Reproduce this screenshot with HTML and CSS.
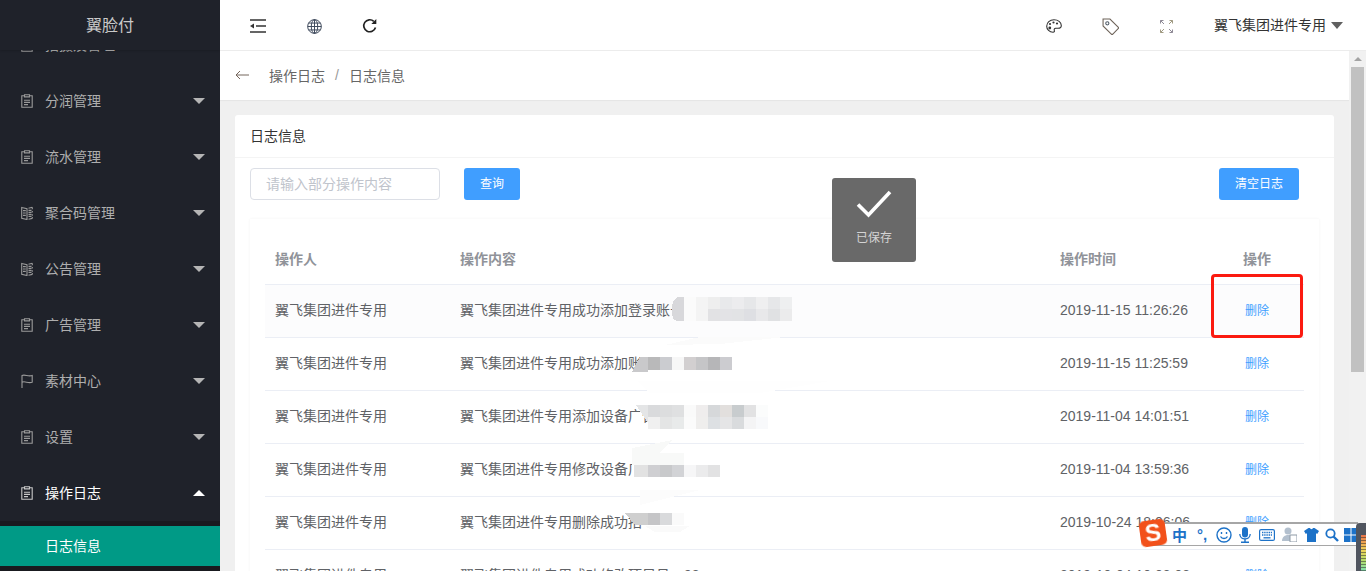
FILE: index.html
```html
<!DOCTYPE html>
<html lang="zh-CN">
<head>
    <meta charset="UTF-8">
    <meta name="viewport" content="width=device-width, initial-scale=1.0">
    <title>日志信息</title>
    <link rel="stylesheet" href="styles.css">
</head>
<body>
    <svg class="icon-defs" width="0" height="0">
        <symbol id="i-clip" viewBox="0 0 12 14">
            <path d="M3.500 1.800H.8v11.500h10.400V1.800H8.500M3.500.7h5v2.200h-5zM3 6.200h6M3 8.400h6M3 10.600h4" fill="none" stroke="currentColor" stroke-width="1.100"/>
        </symbol>
        <symbol id="i-book" viewBox="0 0 12 14">
            <path d="M.7 1.500 6 2.600v10.900L.7 12.400zM2 4.600h2.800M2 7h2.800M2 9.400h2.800M7.500 2.200 11.300 1.300M7.500 13.200l3.800-.8M11.300 1.300v2M11.300 5v1.500M11.300 8.300v1.500M11.300 11v1.400M7.500 4.400h3M7.500 6.400h3M7.500 8.400h3M7.500 10.400h3" fill="none" stroke="currentColor" stroke-width="1.100"/>
        </symbol>
        <symbol id="i-flag" viewBox="0 0 12 14">
            <path d="M1 14V1.500C4 0 7 3 11.200 1.500V8.200C7 9.700 4 6.700 1 8.200" fill="none" stroke="currentColor" stroke-width="1.100"/>
        </symbol>
    </svg>

    <div class="app">
        <aside class="sidebar">
            <div class="logo">翼脸付</div>
            <ul class="menu">
                <li class="menu-item"><svg class="menu-icon"><use href="#i-clip"/></svg><span>拍摄及管理</span><i class="caret"></i></li>
                <li class="menu-item"><svg class="menu-icon"><use href="#i-clip"/></svg><span>分润管理</span><i class="caret"></i></li>
                <li class="menu-item"><svg class="menu-icon"><use href="#i-clip"/></svg><span>流水管理</span><i class="caret"></i></li>
                <li class="menu-item"><svg class="menu-icon"><use href="#i-book"/></svg><span>聚合码管理</span><i class="caret"></i></li>
                <li class="menu-item"><svg class="menu-icon"><use href="#i-book"/></svg><span>公告管理</span><i class="caret"></i></li>
                <li class="menu-item"><svg class="menu-icon"><use href="#i-clip"/></svg><span>广告管理</span><i class="caret"></i></li>
                <li class="menu-item"><svg class="menu-icon"><use href="#i-flag"/></svg><span>素材中心</span><i class="caret"></i></li>
                <li class="menu-item"><svg class="menu-icon"><use href="#i-clip"/></svg><span>设置</span><i class="caret"></i></li>
                <li class="menu-item open"><svg class="menu-icon"><use href="#i-clip"/></svg><span>操作日志</span><i class="caret up"></i></li>
                <li class="submenu"><a class="submenu-item">日志信息</a></li>
            </ul>
        </aside>

        <div class="main">
            <header class="topbar">
                <div class="tools">
                    <span class="tool">
                        <svg width="16" height="14" viewBox="0 0 16 14"><path d="M0 1h16M6 7h10M0 13h16" stroke="#333" stroke-width="1.400" fill="none"/><path d="M0 7l4-2.500v5z" fill="#333"/></svg>
                    </span>
                    <span class="tool">
                        <svg width="15" height="15" viewBox="0 0 14 14" fill="none" stroke="#3a4658" stroke-width=".9"><circle cx="7" cy="7" r="6.400"/><ellipse cx="7" cy="7" rx="3" ry="6.400"/><path d="M7 .6v12.800M.6 7h12.800M1.500 3.800h11M1.500 10.200h11"/></svg>
                    </span>
                    <span class="tool">
                        <svg width="16" height="16" viewBox="0 0 16 16" fill="none"><path d="M13.500 9.500A6 6 0 1 1 11.800 3.300" stroke="#222" stroke-width="1.700"/><path d="M14.300 1v5h-5z" fill="#222"/></svg>
                    </span>
                </div>
                <div class="tools">
                    <span class="tool">
                        <svg width="16" height="14" viewBox="0 0 16 14" fill="none"><path d="M8 .8C3.800.8.700 3.600.7 7.200c0 3.400 2.800 6 6.300 6 1.500 0 1.700-1 1.300-1.900-.4-1 .1-2 1.300-2h2.500c2 0 3.200-1 3.200-2.800C15.300 3 12 .8 8 .8z" stroke="#333" stroke-width="1.100"/><circle cx="4" cy="5" r="1.100" fill="#333"/><circle cx="7.500" cy="3.500" r="1.100" fill="#333"/><circle cx="11" cy="4.500" r="1.100" fill="#333"/><circle cx="3.800" cy="9" r="1.400" fill="#333"/></svg>
                    </span>
                    <span class="tool">
                        <svg width="17" height="17" viewBox="0 0 16 16" fill="none"><path d="M1 1h6.500l7.700 7.700a1 1 0 0 1 0 1.400l-5 5a1 1 0 0 1-1.400 0L1 7.500z" stroke="#6d6258" stroke-width="1"/><circle cx="5" cy="5" r="1.500" stroke="#4f5a66"/></svg>
                    </span>
                    <span class="tool">
                        <svg width="13" height="13" viewBox="0 0 13 13" fill="none" stroke-width="1"><path d="M.5 3.500v-3h3M.5.500l3.500 3.500M12.500 9.500v3h-3M12.500 12.500 9 9" stroke="#8f8a96"/><path d="M12.500 3.500v-3h-3M12.500.500 9 4M.5 9.500v3h3M.5 12.500 4 9" stroke="#a09a82"/></svg>
                    </span>
                </div>
                <div class="user">翼飞集团进件专用<i class="user-caret"></i></div>
            </header>

            <div class="body-row">
                <div class="page">
                    <div class="breadcrumb">
                        <svg class="back" width="14" height="10" viewBox="0 0 14 10" fill="none"><path d="M14 5H1M5 1 1 5l4 4" stroke="#75665c" stroke-width="1"/></svg>
                        <span>操作日志</span>
                        <span class="sep">/</span>
                        <span>日志信息</span>
                    </div>

                    <div class="content">
                        <section class="card">
                            <h2 class="card-title">日志信息</h2>
                            <div class="card-body">
                                <form class="search-bar">
                                    <input class="search-input" type="text" placeholder="请输入部分操作内容">
                                    <button class="btn" type="button">查询</button>
                                    <button class="btn btn-clear" type="button">清空日志</button>
                                </form>

                                <div class="log-panel">
                                    <table class="log-table">
                                        <colgroup>
                                            <col class="col-user"><col class="col-text"><col class="col-time"><col class="col-op">
                                        </colgroup>
                                        <thead>
                                            <tr><th>操作人</th><th>操作内容</th><th>操作时间</th><th class="op">操作</th></tr>
                                        </thead>
                                        <tbody>
                                            <tr class="hover">
                                                <td>翼飞集团进件专用</td>
                                                <td>翼飞集团进件专用成功添加登录账号</td>
                                                <td class="time">2019-11-15 11:26:26</td>
                                                <td class="op"><a class="del">删除</a></td>
                                            </tr>
                                            <tr>
                                                <td>翼飞集团进件专用</td>
                                                <td>翼飞集团进件专用成功添加账号</td>
                                                <td class="time">2019-11-15 11:25:59</td>
                                                <td class="op"><a class="del">删除</a></td>
                                            </tr>
                                            <tr>
                                                <td>翼飞集团进件专用</td>
                                                <td>翼飞集团进件专用添加设备广告</td>
                                                <td class="time">2019-11-04 14:01:51</td>
                                                <td class="op"><a class="del">删除</a></td>
                                            </tr>
                                            <tr>
                                                <td>翼飞集团进件专用</td>
                                                <td>翼飞集团进件专用修改设备广告</td>
                                                <td class="time">2019-11-04 13:59:36</td>
                                                <td class="op"><a class="del">删除</a></td>
                                            </tr>
                                            <tr>
                                                <td>翼飞集团进件专用</td>
                                                <td>翼飞集团进件专用删除成功招</td>
                                                <td class="time">2019-10-24 18:06:06</td>
                                                <td class="op"><a class="del">删除</a></td>
                                            </tr>
                                            <tr>
                                                <td>翼飞集团进件专用</td>
                                                <td>翼飞集团进件专用成功修改项目号：98</td>
                                                <td class="time">2019-10-04 10:03:03</td>
                                                <td class="op"><a class="del">删除</a></td>
                                            </tr>
                                        </tbody>
                                    </table>

                                    <!-- mosaic over the redacted text, page coordinates -->
                                    <svg class="mosaic" width="1069" height="352" shape-rendering="crispEdges">
                                        <g transform="translate(-250 -219)">
                                            <path d="M665 345 700 337H785L720 344z" fill="#fbfbfb"/>
                                            <path d="M637 381H830L760 393H650z" fill="#fefefe"/>
                                            <path d="M632 465V448L672 440 660 453H684V465z" fill="#f8f9f8"/>
                                            <path d="M640 505 700 490H640z" fill="#fcfcfc"/>
                                            <path d="M645 526H690L680 532H655z" fill="#fafafa"/>
                                            <g class="row-1">
                                                <path d="M684 297H678Q672 300 672 309V312Q672 321 678 321H684z" fill="#d8d8db"/>
                                                <rect x="684" y="297" width="12" height="24" fill="#fbfbfb"/>
                                                <rect x="696" y="297" width="12" height="24" fill="#f4f4f4"/>
                                                <rect x="708" y="297" width="12" height="12" fill="#eeeeee"/>
                                                <rect x="720" y="297" width="12" height="12" fill="#e8e9eb"/>
                                                <rect x="732" y="297" width="12" height="12" fill="#ececee"/>
                                                <rect x="744" y="297" width="12" height="12" fill="#e6e7e9"/>
                                                <rect x="756" y="297" width="12" height="12" fill="#efeff0"/>
                                                <rect x="768" y="297" width="12" height="12" fill="#e6e7e9"/>
                                                <rect x="780" y="297" width="12" height="12" fill="#eeeff0"/>
                                                <rect x="708" y="309" width="12" height="12" fill="#e2e2e4"/>
                                                <rect x="720" y="309" width="12" height="12" fill="#e3e3e6"/>
                                                <rect x="732" y="309" width="12" height="12" fill="#e2e3e5"/>
                                                <rect x="744" y="309" width="12" height="12" fill="#dedfe3"/>
                                                <rect x="756" y="309" width="12" height="12" fill="#e8e8ea"/>
                                                <rect x="768" y="309" width="12" height="12" fill="#e0e1e3"/>
                                                <rect x="780" y="309" width="12" height="12" fill="#ebebec"/>
                                            </g>
                                            <g class="row-2">
                                                <path d="M632 372 640 357H648V372z" fill="#c9c9cb"/>
                                                <rect x="648" y="357" width="12" height="13" fill="#b9b9ba"/>
                                                <rect x="660" y="357" width="12" height="13" fill="#cbccd0"/>
                                                <rect x="672" y="357" width="12" height="13" fill="#f7f7f7"/>
                                                <rect x="684" y="357" width="12" height="13" fill="#d2cfd0"/>
                                                <rect x="696" y="357" width="12" height="13" fill="#c5c5c7"/>
                                                <rect x="708" y="357" width="12" height="13" fill="#b6b6b8"/>
                                                <rect x="720" y="357" width="12" height="13" fill="#ccccd0"/>
                                                <rect x="648" y="370" width="12" height="2" fill="#fff"/>
                                            </g>
                                            <g class="row-3">
                                                <path d="M636 405H648V429H652z" fill="#e4e5e6"/>
                                                <rect x="648" y="405" width="12" height="12" fill="#d9dadc"/>
                                                <rect x="660" y="405" width="12" height="12" fill="#dcddde"/>
                                                <rect x="672" y="405" width="12" height="12" fill="#dfe0e1"/>
                                                <rect x="684" y="405" width="12" height="12" fill="#fafafa"/>
                                                <rect x="696" y="405" width="12" height="12" fill="#efeded"/>
                                                <rect x="708" y="405" width="12" height="12" fill="#d6d8da"/>
                                                <rect x="720" y="405" width="12" height="12" fill="#e2dfdd"/>
                                                <rect x="732" y="405" width="12" height="12" fill="#c8ccce"/>
                                                <rect x="744" y="405" width="12" height="12" fill="#e2e2e3"/>
                                                <rect x="756" y="405" width="12" height="12" fill="#fbfcfc"/>
                                                <rect x="648" y="417" width="12" height="12" fill="#f0f0f0"/>
                                                <rect x="660" y="417" width="12" height="12" fill="#e4e5e5"/>
                                                <rect x="672" y="417" width="12" height="12" fill="#e8eaea"/>
                                                <rect x="684" y="417" width="12" height="12" fill="#fbfbfb"/>
                                                <rect x="696" y="417" width="12" height="12" fill="#efeeed"/>
                                                <rect x="708" y="417" width="12" height="12" fill="#dde0e3"/>
                                                <rect x="720" y="417" width="12" height="12" fill="#e5e5e6"/>
                                                <rect x="732" y="417" width="12" height="12" fill="#d9dbdd"/>
                                                <rect x="744" y="417" width="12" height="12" fill="#f4f4f5"/>
                                                <rect x="756" y="417" width="12" height="12" fill="#f8f9fb"/>
                                            </g>
                                            <g class="row-4">
                                                <rect x="634" y="465" width="14" height="12" fill="#e2e2e2"/>
                                                <rect x="648" y="465" width="12" height="12" fill="#cfcfd2"/>
                                                <rect x="660" y="465" width="12" height="12" fill="#c8c9cb"/>
                                                <rect x="672" y="465" width="12" height="12" fill="#d2d3d6"/>
                                                <rect x="684" y="465" width="12" height="12" fill="#f6f6f7"/>
                                                <rect x="696" y="465" width="12" height="12" fill="#ebebec"/>
                                                <rect x="708" y="465" width="12" height="12" fill="#e2e2e3"/>
                                            </g>
                                            <g class="row-5">
                                                <path d="M625 513H648V525H635z" fill="#cfcfcf"/>
                                                <rect x="648" y="513" width="12" height="12" fill="#c5c5c7"/>
                                                <rect x="660" y="513" width="12" height="12" fill="#d9dadc"/>
                                                <rect x="672" y="513" width="12" height="12" fill="#fafafa"/>
                                            </g>
                                        </g>
                                    </svg>
                                    <div class="mark-box"></div>
                                </div>
                            </div>
                        </section>
                    </div>
                </div>

                <div class="scrollbar">
                    <div class="scroll-arrow"><i></i></div>
                    <div class="scroll-thumb"></div>
                </div>
            </div>
        </div>
    </div>

    <div class="toast">
        <svg width="36" height="30" viewBox="0 0 36 30"><path d="M2 15.500 12.500 26 34 3" fill="none" stroke="#fff" stroke-width="3.600"/></svg>
        <span>已保存</span>
    </div>

    <div class="ime-bar">
        <span class="ime-logo">S</span>
        <span class="ime-item ime-lang">中</span>
        <span class="ime-item ime-punct">°,</span>
        <span class="ime-item"><svg width="16" height="16" viewBox="0 0 16 16" fill="none" stroke="#1d72c8" stroke-width="1.400"><circle cx="8" cy="8" r="7"/><path d="M4.500 9.500c1.500 2.700 5.500 2.700 7 0"/><path d="M5.500 5v2M10.500 5v2"/></svg></span>
        <span class="ime-item"><svg width="12" height="16" viewBox="0 0 12 16" fill="#1d72c8"><rect x="3" y="0" width="6" height="10.500" rx="3"/><path d="M.8 7c0 6.500 10.400 6.500 10.400 0" fill="none" stroke="#1d72c8" stroke-width="1.300"/><path d="M5.300 12h1.400v2.500H10V16H2v-1.500h3.300z"/></svg></span>
        <span class="ime-item"><svg width="16" height="12" viewBox="0 0 16 12"><rect x=".6" y=".6" width="14.800" height="10.800" rx="1.500" fill="none" stroke="#1d72c8" stroke-width="1.200"/><path d="M3 3.500h10M3 6h10" stroke="#1d72c8" stroke-width="1.400" stroke-dasharray="1.400 .8"/><path d="M4.500 8.800h7" stroke="#1d72c8" stroke-width="1.300"/></svg></span>
        <span class="ime-item"><svg width="15" height="15" viewBox="0 0 15 15" fill="#b3c0ce"><circle cx="6" cy="4" r="3.500"/><path d="M0 14c0-8 12-8 12 0z"/><rect x="8" y="8" width="7" height="7" fill="#fff" stroke="#8d99a6"/></svg></span>
        <span class="ime-item"><svg width="15" height="14" viewBox="0 0 15 14" fill="#1d72c8"><path d="M4.500 0h1.500c.3 1.500 2.700 1.500 3 0h1.500L15 3l-1.800 3L12 5.200V14H3V5.200L1.800 6 0 3z"/></svg></span>
        <span class="ime-item"><svg width="14" height="14" viewBox="0 0 14 14" fill="none" stroke="#1d72c8"><circle cx="5.500" cy="5.500" r="4.200" stroke-width="1.800"/><path d="m8.500 8.500 4.500 4.500" stroke-width="2.400"/></svg></span>
        <span class="ime-item"><svg width="14" height="14" viewBox="0 0 14 14" fill="#1d72c8"><rect width="6.500" height="6.500"/><rect x="7.500" width="6.500" height="6.500"/><rect y="7.500" width="6.500" height="6.500"/><rect x="7.500" y="7.500" width="6.500" height="6.500"/></svg></span>
    </div>
    <div class="ime-meter"><i></i></div>
</body>
</html>
```

FILE: styles.css
```css
* {
    box-sizing: border-box;
}

html, body {
    height: 100%;
}

body {
    margin: 0;
    overflow: hidden;
    font-family: "Liberation Sans", "Noto Sans CJK SC", sans-serif;
    font-size: 14px;
    color: #606266;
    background: #f0f0f0;
}

.icon-defs {
    display: block;
    height: 0;
}

.app {
    display: flex;
    height: 571px;
    overflow: hidden;
}

/* sidebar */
.sidebar {
    flex: 0 0 220px;
    background: #1f222a;
    overflow: hidden;
}

.logo {
    position: relative;
    z-index: 1;
    height: 50px;
    line-height: 52px;
    text-align: center;
    font-size: 16px;
    color: #c9c9c9;
    background: #1f222a;
    box-shadow: 0 1px 2px rgba(0, 0, 0, 0.15);
}

.menu {
    list-style: none;
    margin: -33px 0 0;
    padding: 0;
}

.menu-item {
    display: flex;
    align-items: center;
    height: 56px;
    padding-left: 21px;
    color: #aeaeae;
}

.menu-item span {
    flex: 1;
    margin-top: -2px;
}

.menu-item.open {
    color: #fff;
}

.menu-icon {
    width: 12px;
    height: 14px;
    margin-right: 12px;
    color: #9a9a9a;
}

.menu-item.open .menu-icon {
    color: #c8c8c8;
}

.caret {
    width: 0;
    height: 0;
    margin-right: 15px;
    border-left: 6px solid transparent;
    border-right: 6px solid transparent;
    border-top: 6px solid #b5b5b5;
}

.caret.up {
    border-top: 0;
    border-bottom: 6px solid #fff;
}

.submenu {
    height: 50px;
    padding: 5px 0;
    background: #191a1f;
}

.submenu-item {
    display: block;
    height: 40px;
    line-height: 40px;
    padding-left: 45px;
    color: #fff;
    background: #009a86;
}

/* right side */
.main {
    flex: 1;
    display: flex;
    flex-direction: column;
    min-width: 0;
}

.topbar {
    position: relative;
    z-index: 2;
    flex: 0 0 51px;
    display: flex;
    align-items: center;
    padding-left: 10px;
    background: #fff;
    border-bottom: 1px solid #ececec;
    color: #333;
}

.tools {
    display: flex;
}

.tools:nth-child(2) {
    margin-left: auto;
}

.tool {
    display: flex;
    align-items: center;
    justify-content: center;
    width: 56px;
    height: 50px;
    padding-top: 2px;
}

.user {
    display: flex;
    align-items: center;
    padding: 0 23px 2px 20px;
    height: 50px;
}

.user-caret {
    width: 0;
    height: 0;
    margin: 2px 0 0 5px;
    border-left: 6px solid transparent;
    border-right: 6px solid transparent;
    border-top: 7px solid #606060;
}

.body-row {
    flex: 1;
    display: flex;
    min-height: 0;
}

.page {
    flex: 1;
    min-width: 0;
    overflow: hidden;
}

.breadcrumb {
    display: flex;
    align-items: center;
    height: 49px;
    padding: 0 0 2px 15px;
    background: #fff;
    box-shadow: 0 1px 1px rgba(0, 0, 0, 0.04);
    color: #666;
}

.back {
    margin-right: 20px;
}

.sep {
    margin: 0 10px;
    color: #999;
}

.content {
    padding: 15px;
}

.card {
    background: #fff;
    border-radius: 3px;
}

.card-title {
    margin: 0;
    height: 43px;
    line-height: 42px;
    padding-left: 15px;
    font-size: 14px;
    font-weight: normal;
    color: #333;
    border-bottom: 1px solid #f4f4f4;
}

.card-body {
    padding: 10px 15px 15px;
}

.search-bar {
    display: flex;
    align-items: center;
    margin-bottom: 19px;
}

.search-input {
    width: 190px;
    height: 32px;
    padding: 0 15px;
    font: inherit;
    border: 1px solid #dcdfe6;
    border-radius: 4px;
    outline: none;
}

.search-input::placeholder {
    color: #c0c4cc;
}

.btn {
    height: 32px;
    margin-left: 24px;
    padding: 0 16px 3px;
    font: inherit;
    font-size: 12px;
    color: #fff;
    background: #409eff;
    border: none;
    border-radius: 3px;
}

.btn-clear {
    margin-left: auto;
    margin-right: 20px;
}

.log-panel {
    position: relative;
    padding: 15px 15px 20px;
    box-shadow: 0 0 3px rgba(0, 0, 0, 0.05);
}

.log-table {
    width: 1039px;
    table-layout: fixed;
    border-collapse: collapse;
}

.col-user { width: 185px; }
.col-text { width: 600px; }
.col-time { width: 160px; }
.col-op { width: 94px; }

.log-table th,
.log-table td {
    padding: 0 0 0 10px;
    text-align: left;
    border-bottom: 1px solid #ebeef5;
}

.log-table th {
    height: 50px;
    padding-bottom: 2px;
    color: #909399;
    font-weight: bold;
}

.log-table td {
    height: 53px;
    padding-bottom: 4px;
}

.log-table td.time,
.log-table td.op {
    padding-bottom: 2px;
}

.log-table .op {
    padding-left: 0;
    text-align: center;
}

.log-table tr.hover td {
    background: #fcfcfd;
}

.del {
    font-size: 12px;
    color: #409eff;
}

/* overlays */
.mosaic {
    position: absolute;
    left: 0;
    top: 0;
    pointer-events: none;
}

.mark-box {
    position: absolute;
    left: 961px;
    top: 55px;
    width: 92px;
    height: 64px;
    border: 3px solid #fb1a10;
    border-radius: 4px;
}

.scrollbar {
    flex: 0 0 17px;
    display: flex;
    flex-direction: column;
    align-items: center;
    background: #f1f1f1;
}

.scroll-arrow {
    display: flex;
    align-items: center;
    justify-content: center;
    height: 16px;
}

.scroll-arrow i {
    width: 0;
    height: 0;
    border-left: 4px solid transparent;
    border-right: 4px solid transparent;
    border-bottom: 4px solid #a3a3a3;
}

.scroll-thumb {
    width: 13px;
    margin-right: 1px;
    height: 305px;
    background: #c1c1c1;
}

.toast {
    position: fixed;
    left: 832px;
    top: 178px;
    width: 84px;
    height: 84px;
    padding-top: 11px;
    display: flex;
    flex-direction: column;
    align-items: center;
    font-size: 12px;
    color: #d4d4d4;
    background: #696969;
    border-radius: 3px;
}

.toast span {
    margin-top: 9px;
    line-height: 20px;
}

.ime-bar {
    position: fixed;
    left: 1146px;
    top: 522px;
    width: 212px;
    height: 24px;
    display: grid;
    grid-template-columns: 23px 22px 21px 22px 22px 23px 21px 20px 18px;
    padding-left: 22px;
    align-items: center;
    background: #fff;
    border-top: 2px solid #a6a6a6;
    border-bottom: 1px solid #a6a6a6;
}

.ime-logo {
    position: absolute;
    left: -6px;
    top: -4px;
    width: 26px;
    height: 26px;
    line-height: 25px;
    text-align: center;
    font-size: 24px;
    font-weight: bold;
    color: #fff;
    background: #f2511b;
    border-radius: 5px;
    transform: rotate(-8deg);
}

.ime-item {
    display: flex;
    align-items: center;
    justify-content: center;
}

.ime-lang {
    font-size: 15px;
    font-weight: bold;
    color: #1d72c8;
}

.ime-punct {
    font-size: 15px;
    font-weight: bold;
    color: #1d72c8;
}

.ime-meter {
    position: fixed;
    left: 1356px;
    top: 523px;
    width: 10px;
    height: 48px;
    background: #50555f;
    border-radius: 4px 0 0 0;
}

.ime-meter i {
    display: block;
    margin: 12px 0 0 5px;
    width: 5px;
    height: 36px;
    background: repeating-linear-gradient(to bottom, transparent 0 2px, rgba(40, 40, 40, 0.5) 2px 3px), linear-gradient(to bottom, #e8734a, #f2d25a 40%, #b7dd6a 70%, #7fe0b0);
}
```
